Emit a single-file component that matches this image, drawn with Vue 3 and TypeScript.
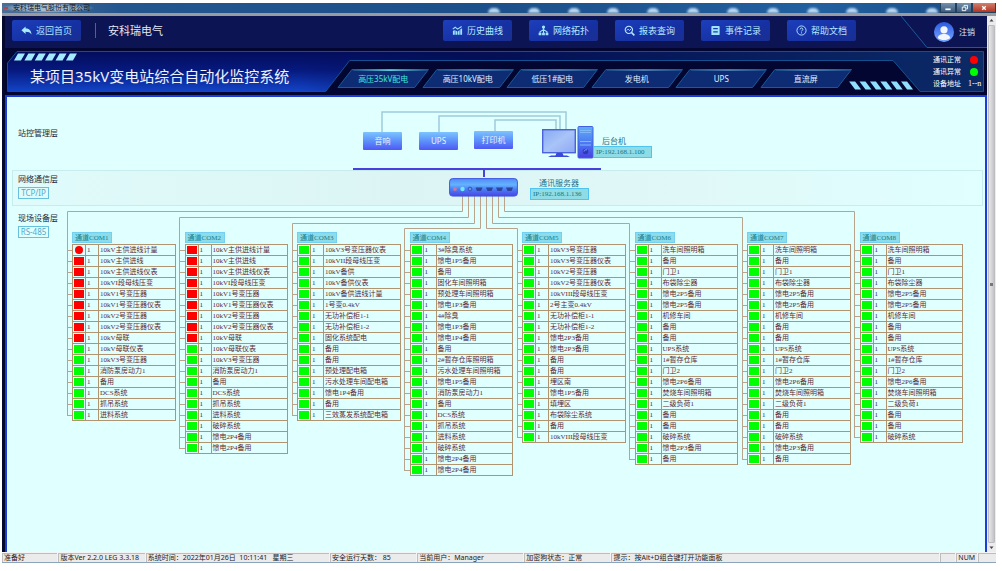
<script setup lang="ts">
import { ref } from 'vue'

interface Channel {
  name: string
  faults: number
  devices: string[]
}

const navItems = [
  { id: 'chart', label: '历史曲线' },
  { id: 'topology', label: '网络拓扑' },
  { id: 'report', label: '报表查询' },
  { id: 'events', label: '事件记录' },
  { id: 'help', label: '帮助文档' },
]

const tabs = ['高压35kV配电', '高压10kV配电', '低压1#配电', '发电机', 'UPS', '直流屏']
const activeTab = ref(0)

const incoming = [
  '10kV主供进线计量', '10kV主供进线', '10kV主供进线仪表', '10kVI段母线压变', '10kV1号变压器',
  '10kV1号变压器仪表', '10kV2号变压器', '10kV2号变压器仪表', '10kV母联', '10kV母联仪表',
  '10kV3号变压器', '消防泵房动力1', '备用', 'DCS系统', '抓吊系统', '进料系统',
]
const workshop = [
  '洗车间照明箱', '备用', '门卫1', '布袋除尘器', '馈电2P5备用', '馈电2P5备用', '机修车间', '备用', '备用',
  'UPS系统', '1#暂存仓库', '门卫2', '馈电2P6备用', '焚烧车间照明箱', '二级负荷1', '备用', '备用', '破碎系统',
]

const channels: Channel[] = [
  { name: '通道COM1', faults: 9, devices: incoming },
  { name: '通道COM2', faults: 9, devices: [...incoming, '破碎系统', '馈电2P4备用', '馈电2P4备用'] },
  {
    name: '通道COM3', faults: 0, devices: [
      '10kV3号变压器仪表', '10kVII段母线压变', '10kV备供', '10kV备供仪表', '10kV备供进线计量', '1号变0.4kV',
      '无功补偿柜1-1', '无功补偿柜1-2', '固化系统配电', '备用', '备用', '预处理配电箱', '污水处理车间配电箱',
      '馈电1P4备用', '备用', '三效蒸发系统配电箱',
    ],
  },
  {
    name: '通道COM4', faults: 0, devices: [
      '3#除臭系统', '馈电1P5备用', '备用', '固化车间照明箱', '预处理车间照明箱', '馈电1P3备用', '4#除臭',
      '馈电1P3备用', '馈电1P4备用', '备用', '2#暂存仓库照明箱', '污水处理车间照明箱', '馈电1P5备用',
      '消防泵房动力1', '备用', 'DCS系统', '抓吊系统', '进料系统', '破碎系统', '馈电2P4备用', '馈电2P4备用',
    ],
  },
  {
    name: '通道COM5', faults: 0, devices: [
      '10kV3号变压器', '10kV3号变压器仪表', '10kV2号变压器', '10kV2号变压器仪表', '10kVIII段母线压变',
      '2号主变0.4kV', '无功补偿柜1-1', '无功补偿柜1-2', '馈电2P3备用', '馈电2P3备用', '备用', '备用', '埋区南',
      '馈电1P5备用', '填埋区', '布袋除尘系统', '备用', '10kVIII段母线压变',
    ],
  },
  { name: '通道COM6', faults: 0, devices: [...workshop, '馈电2P3备用', '备用'] },
  { name: '通道COM7', faults: 0, devices: [...workshop, '馈电2P3备用', '备用'] },
  { name: '通道COM8', faults: 0, devices: workshop },
]

const STAGE = 978
const left = (x: number) => ({ left: `${(x / STAGE) * 100}%` })

const trunkX = [60, 172, 285, 397, 510, 622, 735, 847]
const dropX = [455, 461, 467, 473, 479, 485, 491, 497]
const levelY = [114, 120, 126, 131, 131, 126, 120, 114]
const FIRST_ROW = 153
const ROW = 11

const wires = channels.map((c, i) => {
  const t = trunkX[i]
  const end = FIRST_ROW + (c.devices.length - 1) * ROW
  let d = `M${dropX[i]}.5 99V${levelY[i]}.5H${t}.5V${end}.5`
  for (let r = 0; r < c.devices.length; r++) d += `M${t} ${FIRST_ROW + r * ROW}.5h6`
  return d
})

const peripherals = [
  { label: '音响', x: 356, cls: 'mid' },
  { label: 'UPS', x: 412, cls: 'mid' },
  { label: '打印机', x: 467, cls: 'high' },
]

const stripes = [0, 1, 2, 3, 4, 5]
const blobs = Array.from({ length: 12 }, (_, i) => i)

const status = [
  '准备好', '版本Ver 2.2.0 LEG 3.3.18', '系统时间：2022年01月26日  10:11:41   星期三', '安全运行天数： 85',
  '当前用户：Manager', '加密狗状态：正常', '提示：按Alt+D组合键打开功能面板', '', 'NUM', '',
]
</script>

<template>
  <div class="page">
    <div class="titlebar">
      <span class="app-name"><i class="app-mark"></i>安科瑞电气股份有限公司</span>
      <div class="glints"><i v-for="b in blobs" :key="b"></i></div>
      <div class="win-buttons">
        <button type="button" aria-label="最小化"><svg viewBox="0 0 16 9"><path d="M5 6h6" stroke="#fff" stroke-width="2" /></svg></button>
        <button type="button" aria-label="还原"><svg viewBox="0 0 16 9"><path d="M6 3.500h4v4h-4zM8 3V1.500h4v4h-1.500" fill="none" stroke="#fff" /></svg></button>
        <button type="button" class="close" aria-label="关闭"><svg viewBox="0 0 22 9"><path d="M9 2.500l4 4M13 2.500l-4 4" stroke="#fff" stroke-width="1.500" /></svg></button>
      </div>
    </div>

    <div class="body">
      <div class="screen">
        <header class="header">
          <button type="button" class="nav-btn back">
            <svg viewBox="0 0 12 10"><path d="M5 .5v2.300c4 0 6 2 6.500 6.500-1.500-2.300-3.300-3-6.500-3v2.400L.5 4.600z" fill="#a8eaff" /></svg>
            返回首页
          </button>
          <span class="divider"></span>
          <span class="brand">安科瑞电气</span>
          <nav class="nav">
            <button v-for="n in navItems" :key="n.id" type="button" class="nav-btn">
              <svg v-if="n.id === 'chart'" viewBox="0 0 12 10"><path d="M1 9.500v-4l2-1v5zM3.700 9.500v-4.800l2 1.300v3.500zM6.300 9.500v-3.500l2-1.500v5zM9 9.500V3.800l2-1.300v7z" fill="#9fe4ff" /><path d="M.8 3.500L3.500 1.400 6 3.500 10.500.6" fill="none" stroke="#9fe4ff" stroke-width="1.200" /></svg>
              <svg v-else-if="n.id === 'topology'" viewBox="0 0 12 12"><path d="M6 3v6M2.200 9V7.500L6 5l3.800 2.500V9" fill="none" stroke="#9fe4ff" stroke-width="1.200" /><circle cx="6" cy="2.300" r="1.800" fill="#9fe4ff" /><path d="M.7 8.500h3v2.800h-3zM4.500 8.500h3v2.800h-3zM8.300 8.500h3v2.800h-3z" fill="#9fe4ff" /></svg>
              <svg v-else-if="n.id === 'report'" viewBox="0 0 12 12"><circle cx="5.300" cy="5.300" r="4" fill="none" stroke="#b9eaff" stroke-width="1.200" /><path d="M8.300 8.300l3 3" stroke="#b9eaff" stroke-width="1.600" /><path d="M3 6l1.500-1.500L6 6l1.800-1.800" fill="none" stroke="#b9eaff" /></svg>
              <svg v-else-if="n.id === 'events'" viewBox="0 0 12 12"><rect x="1.500" y="1" width="9" height="10" rx="1" fill="#9fe4ff" /><path d="M3.500 4h5M3.500 7.500h5" stroke="#1b38a8" stroke-width="1.300" /></svg>
              <svg v-else viewBox="0 0 12 12"><circle cx="6" cy="6" r="5" fill="none" stroke="#b9eaff" /><path d="M4.500 4.800c0-2 3-2 3 0 0 1-1.500 1.200-1.500 2.200M6 8v1.200" fill="none" stroke="#b9eaff" /></svg>
              {{ n.label }}
            </button>
          </nav>
          <div class="user">
            <svg class="user-edge" viewBox="0 0 86 32" preserveAspectRatio="none"><path d="M0 0L26 31.500H86" fill="none" stroke="#1c5a9c" /></svg>
            <svg class="avatar" viewBox="0 0 20 20">
              <defs><linearGradient id="av" x1="0" y1="0" x2="0" y2="1"><stop offset="0" stop-color="#2a5ae0" /><stop offset="1" stop-color="#7ba6ff" /></linearGradient></defs>
              <circle cx="10" cy="10" r="10" fill="url(#av)" /><circle cx="10" cy="7.800" r="3.600" fill="#f2f6ff" /><path d="M3.800 16c.5-3 3-4 6.200-4s5.700 1 6.200 4c-3 2.700-9.400 2.700-12.400 0z" fill="#f2f6ff" />
            </svg>
            <a href="#logout">注销</a>
          </div>
        </header>

        <section class="banner">
          <svg class="banner-bg" viewBox="0 0 983 47" preserveAspectRatio="none">
            <defs>
              <linearGradient id="bv" x1="0" y1="0" x2="0" y2="1"><stop offset="0" stop-color="#030d5c" /><stop offset=".45" stop-color="#06187c" /><stop offset="1" stop-color="#1344c8" /></linearGradient>
              <linearGradient id="bh" x1="0" y1="0" x2="1" y2="0"><stop offset=".3" stop-color="#040f55" stop-opacity="0" /><stop offset=".5" stop-color="#040f55" /><stop offset="1" stop-color="#0b2a66" /></linearGradient>
            </defs>
            <path d="M12 3.500H979.500V43.500H916L889 12.500H345L321 43.500H2.500V15z" fill="url(#bv)" />
            <path d="M12 3.500H979.500V43.500H916L889 12.500H345L321 43.500H2.500V15z" fill="url(#bh)" stroke="#14508e" />
            <path v-for="s in stripes" :key="'l' + s" :d="`M${13 + s * 10.4} 5.500h7l-4 7h-7z`" fill="#a4eaff" />
            <path v-for="s in stripes" :key="'r' + s" :d="`M${845 + s * 10.4} 33.500h6l6 8h-6z`" fill="#8fe0ff" />
          </svg>
          <h1>某项目35kV变电站综合自动化监控系统</h1>
          <nav class="tabs">
            <button v-for="(t, i) in tabs" :key="t" type="button" :class="{ active: i === activeTab }" @click="activeTab = i">
              <svg viewBox="0 0 93 19" preserveAspectRatio="none">
                <defs><linearGradient :id="'tl' + i" x1="0" y1="0" x2="1" y2="0"><stop offset="0" stop-color="#1c5590" /><stop offset=".5" :stop-color="i === activeTab ? '#7affff' : '#5f93c4'" /><stop offset="1" stop-color="#1c5590" /></linearGradient></defs>
                <path d="M15 .5H92L78 18.500H1z" fill="#0d2c74" stroke="#1c5a94" />
                <path d="M16 .500H91V1.700H16z" :fill="`url(#tl${i})`" />
              </svg>
              <span>{{ t }}</span>
            </button>
          </nav>
          <dl class="legend">
            <div><dt>通讯正常</dt><dd><i class="dot red"></i></dd></div>
            <div><dt>通讯异常</dt><dd><i class="dot green"></i></dd></div>
            <div><dt>设备地址</dt><dd>1--n</dd></div>
          </dl>
        </section>

        <main class="stage">
          <div class="band"></div>
          <svg class="wires" viewBox="0 0 978 455" preserveAspectRatio="none">
            <g fill="none" stroke="#9ccbdc" stroke-width="1.500">
              <path d="M375 36V15H559V32" /><path d="M432 36V19H553V32" /><path d="M488 35V23H549V32" />
            </g>
            <path d="M346 72H594" stroke="#4a40dc" stroke-width="2" /><path d="M477 72V80" stroke="#4a40dc" stroke-width="2" />
            <path v-for="(d, i) in wires" :key="i" :d="d" fill="none" stroke="#b8a48c" />
          </svg>

          <div class="layer l1"><h2>站控管理层</h2></div>
          <div class="layer l2"><h2>网络通信层</h2><span>TCP/IP</span></div>
          <div class="layer l3"><h2>现场设备层</h2><span>RS-485</span></div>

          <div v-for="p in peripherals" :key="p.label" class="node" :class="p.cls" :style="left(p.x)">{{ p.label }}</div>

          <svg class="computer" :style="left(535)" viewBox="0 0 52 34">
            <defs>
              <linearGradient id="mon" x1="0" y1="0" x2="1" y2="1"><stop offset="0" stop-color="#86a8f4" /><stop offset=".5" stop-color="#a9c4f8" /><stop offset="1" stop-color="#8ea6f6" /></linearGradient>
              <linearGradient id="tow" x1="0" y1="0" x2="0" y2="1"><stop offset="0" stop-color="#5fb0f8" /><stop offset=".6" stop-color="#4a70f0" /><stop offset="1" stop-color="#4a40e0" /></linearGradient>
            </defs>
            <rect x=".7" y="3.700" width="32.600" height="23" fill="url(#mon)" stroke="#4a62dc" stroke-width="1.400" />
            <path d="M14.500 27h6l1 2.500h3.500l3 1.500H6l3-1.500h4.500z" fill="#3c48d8" />
            <rect x="36" y=".5" width="15" height="31.500" rx="1" fill="url(#tow)" stroke="#4060e0" />
            <path d="M38 4.500h11M38 6.500h11M38 15.500h11M38 19h11" stroke="#82b8fa" /><circle cx="43.500" cy="25.500" r="2.800" fill="#2f38b8" /><path d="M42 25.500a2 2 0 0 1 3-1.500" fill="none" stroke="#7da4ff" />
          </svg>
          <div class="tag-group host" :style="left(586)"><b>后台机</b><span class="ip">IP:192.168.1.100</span></div>

          <svg class="router" :style="left(442)" viewBox="0 0 69 20">
            <defs><linearGradient id="rt" x1="0" y1="0" x2="0" y2="1"><stop offset="0" stop-color="#4f8cf4" /><stop offset=".35" stop-color="#66b2ff" /><stop offset=".6" stop-color="#4a80f6" /><stop offset="1" stop-color="#4a44e4" /></linearGradient></defs>
            <rect x=".6" y="1.600" width="67.800" height="17.500" rx="3" fill="url(#rt)" stroke="#3f58e0" />
            <circle cx="6" cy="12" r="1.900" fill="#c07aa8" /><circle cx="13.500" cy="12" r="2.200" fill="#70e8f4" /><circle cx="21" cy="12" r="1.900" fill="#6c90e4" stroke="#3454b8" />
            <path d="M26.500 10.500h7l-1.500 3.500h-4zM37 10.500h7l-1.500 3.500h-4zM47 10.500h7l-1.500 3.500h-4zM57 10.500h7l-1.500 3.500h-4z" fill="#2c459e" />
          </svg>
          <div class="tag-group server" :style="left(523)"><b>通讯服务器</b><span class="ip">IP:192.168.1.136</span></div>

          <div class="channels">
            <table v-for="c in channels" :key="c.name">
              <caption><span>{{ c.name }}</span></caption>
              <colgroup><col class="c-state" /><col class="c-addr" /><col /></colgroup>
              <tbody>
                <tr v-for="(d, r) in c.devices" :key="r">
                  <td><i class="lamp" :class="{ fault: r < c.faults, round: c.name === '通道COM1' && r === 0 }"></i></td>
                  <td class="addr">1</td>
                  <td>{{ d }}</td>
                </tr>
              </tbody>
            </table>
          </div>
        </main>
      </div>

      <div class="scroll" aria-hidden="true">
        <svg viewBox="0 0 9 9"><path d="M2.500 5.500h4l-2-2.500z" fill="#444" /></svg>
        <div class="thumb"><i></i></div>
        <svg viewBox="0 0 9 9"><path d="M2.500 3.500h4l-2 2.500z" fill="#444" /></svg>
      </div>
    </div>

    <footer class="status"><span v-for="(s, i) in status" :key="i">{{ s }}</span></footer>
  </div>
</template>

<style>
body { margin: 0; background: #fff; }
</style>

<style scoped>
* { box-sizing: border-box; }
.page {
  min-height: 100vh; padding: 3px 6px 8px 2px; display: flex; flex-direction: column;
  font-family: "Noto Sans", "Noto Sans CJK SC", sans-serif; font-size: 9px; color: #fff;
}
button { font-family: inherit; border: 0; padding: 0; margin: 0; color: inherit; cursor: pointer; background: none; }
h1, h2, dl, dd { margin: 0; font-weight: 400; }
svg { display: block; flex: none; }

.titlebar {
  height: 13px; display: flex; align-items: stretch; overflow: hidden;
  background: linear-gradient(90deg, #4a6f98, #24568e 12%, #1c508a 50%, #2260a0 82%, #174a84);
  border-bottom: 3px solid #9a9ba0;
}
.app-name {
  display: flex; align-items: center; gap: 5px; padding: 0 8px 0 2px; width: 92px; flex: none; white-space: nowrap;
  font-size: 7px; line-height: 10px; color: #10131c;
  background: radial-gradient(ellipse, #a9bccd 40%, transparent 72%);
}
.app-mark { width: 4px; height: 2px; background: #b0484a; flex: none; }
.glints { flex: 1; margin: 0 2px 0 394px; display: flex; justify-content: space-between; align-items: flex-end; }
.glints i { width: 12px; height: 5px; border-radius: 5px 5px 0 0; background: #b8d6f0; filter: blur(1px); }
.win-buttons { display: flex; margin-left: 0; }
.win-buttons button { width: 16px; background: linear-gradient(#7490ac, #3c5c80); border: 1px solid #20405e; border-top: 0; }
.win-buttons svg { width: 100%; height: 8px; }
.win-buttons .close { width: 24px; background: linear-gradient(#d08070, #b43420); }

.body { flex: 1; display: flex; }
.screen { flex: 1; min-width: 0; display: flex; flex-direction: column; background: #020630; border-left: 3px solid #04082c; }

.header { position: relative; height: 32px; display: flex; align-items: center; padding: 0 12px 4px 7px; background: #0c1453; }
.nav-btn {
  width: 69px; height: 21px; display: flex; align-items: center; justify-content: center; gap: 4px; white-space: nowrap;
  font-size: 9px; color: #b4e8ff; border-radius: 2px; background: linear-gradient(160deg, #1d3fbc, #1530a2 60%, #1a2f92);
}
.nav-btn svg { width: 11px; height: 11px; }
.divider { width: 1px; height: 15px; background: #1c7a9c; margin: 0 12px 0 14px; }
.brand { font-size: 11px; color: #e4e8f6; }
.nav { flex: 1; display: flex; justify-content: flex-end; gap: 17px; margin-right: 78px; }
.user { display: flex; align-items: center; gap: 5px; color: #dfe4f4; margin-top: 3px; }
.user-edge { position: absolute; right: 0; top: 0; width: 86px; height: 32px; }
.avatar { width: 20px; height: 20px; position: relative; }
.user a { position: relative; color: inherit; text-decoration: none; font-size: 8px; }

.banner { position: relative; height: 47px; display: grid; grid-template-columns: minmax(0, 336fr) minmax(0, 507fr) minmax(0, 139fr); align-items: center; }
.banner-bg { position: absolute; inset: 0; width: 100%; height: 100%; }
.banner h1 { position: relative; padding-left: 25px; font-size: 15px; line-height: 20px; margin-top: 8px; white-space: nowrap; color: #eef2ff; }
.tabs { position: relative; display: grid; grid-template-columns: repeat(6, 1fr); margin-top: 14px; }
.tabs button { position: relative; height: 19px; font-size: 8px; color: #e4ecff; }
.tabs svg { position: absolute; left: -4px; top: 0; width: calc(100% + 8px); height: 100%; }
.tabs span { position: relative; white-space: nowrap; }
.tabs .active { color: #3fe6dc; }
.legend { position: relative; padding-left: 85px; font-size: 7px; line-height: 12px; }
.legend div { display: flex; gap: 7px; height: 12px; }
.legend dt { white-space: nowrap; width: 28px; }
.legend dd { font-family: "Liberation Serif", serif; font-size: 8px; display: flex; align-items: center; white-space: nowrap; }
.dot { width: 8px; height: 8px; border-radius: 50%; margin-left: 2px; }
.red { background: #f00; }
.green { background: #0f0; }

.stage { position: relative; flex: 1; min-height: 457px; background: #e0ffff; border: 2px solid #1c3ed8; border-bottom: 0; color: #202838; }
.band { position: absolute; left: 5px; right: 2px; top: 73px; height: 36px; border: 1px solid #c6ecee; background: linear-gradient(90deg, #e0fbfb, #dcf4f4 40%, #e0f8f8 70%, #e0ffff); }
.wires { position: absolute; left: 0; top: 0; width: 100%; height: 455px; }
.layer { position: absolute; left: 11px; display: flex; flex-direction: column; align-items: flex-start; gap: 2px; }
.layer h2 { font-size: 8px; line-height: 12px; }
.layer span { width: 31px; height: 12px; border: 1px solid #68c0dc; font-size: 8px; line-height: 10px; text-align: center; color: #4cabcc; }
.l1 { top: 30px; }
.l2 { top: 76px; }
.l3 { top: 115px; }
.node {
  position: absolute; width: 39px; height: 18px; font-size: 8px; line-height: 18px; text-align: center; color: #e8f4ff;
  border-radius: 1px; background: linear-gradient(#7cc4ff, #5a8cfa 55%, #5058f4);
}
.mid { top: 35px; }
.high { top: 34px; }
.computer { position: absolute; top: 29px; width: 52px; height: 34px; }
.router { position: absolute; top: 80px; width: 69px; height: 20px; }
.tag-group { position: absolute; display: flex; flex-direction: column; }
.tag-group b { font-weight: 400; font-size: 8px; line-height: 10px; padding-left: 9px; color: #1c7088; }
.ip { width: 59px; height: 12px; border: 1px solid #50c4ee; background: #8edce6; color: #1c7480; font: 7px/10px "Liberation Serif", serif; padding-left: 2px; white-space: nowrap; }
.host { top: 39px; }
.server { top: 81px; }

.channels { position: relative; display: grid; grid-template-columns: repeat(8, 1fr); gap: 9px; align-items: start; padding: 135px 22px 16px 65px; }
table { width: 100%; table-layout: fixed; border-collapse: collapse; font: 7px/10px "Liberation Serif", "Noto Sans CJK SC", serif; color: #5c2c34; }
caption { text-align: left; padding-bottom: 1px; }
caption span { display: block; width: 40px; height: 11px; line-height: 10px; padding-left: 2px; border: 1px solid #74d0f0; background: #8cdcea; color: #18808c; }
td { height: 11px; padding: 0 0 0 1px; border: 1px solid #b09470; white-space: nowrap; overflow: hidden; line-height: 10px; }
.c-state, .c-addr { width: 13px; }
.addr { color: #2c2c58; }
.lamp { display: block; width: 10px; height: 8px; background: #0f0; }
.lamp.fault { background: #f00; }
.lamp.round { width: 8px; border-radius: 50%; margin-left: 1px; }

.scroll { width: 9px; display: flex; flex-direction: column; align-items: center; background: #ececee; }
.scroll svg { width: 9px; height: 9px; }
.thumb { flex: 1; width: 7px; display: flex; align-items: center; justify-content: center; background: linear-gradient(90deg, #e8e8ea, #c4c4c8); border: 1px solid #bcbcc0; border-radius: 1px; }
.thumb i { width: 3px; height: 3px; background: #777; }

.status {
  display: grid; grid-template-columns: 56fr 87fr 185fr 87fr 107fr 87fr 331fr 15fr 21fr 18fr; gap: 1px;
  height: 11px; padding: 1px 0 0; background: #f4f4f4; color: #222; font-size: 7px; line-height: 8px; border-bottom: 1px solid #8ca4bc;
}
.status span { background: #ebebeb; border: solid #bdbdbd; border-width: 1px 0 0 1px; white-space: pre; min-width: 0; padding-left: 1px; }
</style>
